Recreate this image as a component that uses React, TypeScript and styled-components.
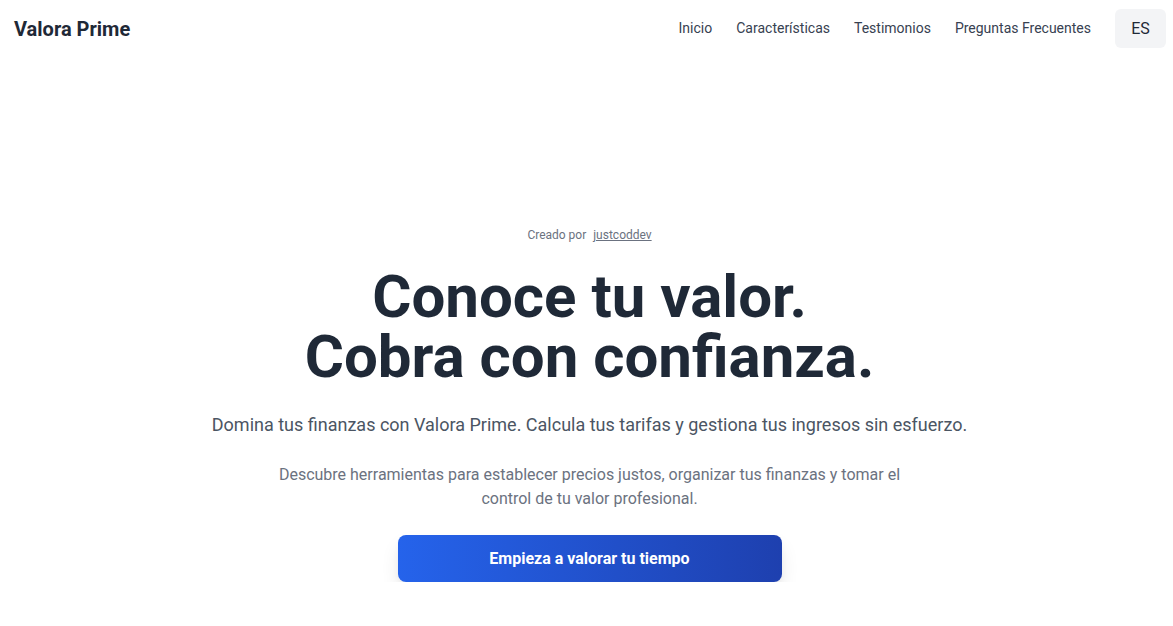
import React from "react";
import styled, { createGlobalStyle } from "styled-components";

const Global = createGlobalStyle`
  * { box-sizing: border-box; }
  body { margin: 0; font-family: Roboto, "Liberation Sans", sans-serif; background: #ffffff; color: #1f2937; }
`;

const Header = styled.header`
  display: flex;
  align-items: center;
  justify-content: space-between;
  height: 57px;
  padding: 0 7px 0 14px;
`;

const Logo = styled.div`
  font-size: 20px;
  font-weight: 700;
  color: #1f2937;
`;

const Nav = styled.nav`
  display: flex;
  align-items: center;
`;

const NavLink = styled.a`
  font-size: 14px;
  line-height: 18px;
  color: #374151;
  text-decoration: none;
  margin-right: 24px;
  margin-bottom: 2px;
`;

const LangButton = styled.button`
  width: 51px;
  height: 39px;
  border: none;
  border-radius: 6px;
  background: #f3f4f6;
  font-family: inherit;
  font-size: 16px;
  color: #1f2937;
`;

const Hero = styled.section`
  display: flex;
  flex-direction: column;
  align-items: center;
  text-align: center;
  padding: 170px 0 0 6px;
`;

const Credit = styled.p`
  margin: 0;
  font-size: 12px;
  line-height: 16px;
  color: #6b7280;
`;

const CreditLink = styled.a`
  color: #6b7280;
  text-decoration: underline;
  margin-left: 4px;
`;

const Title = styled.h1`
  margin: 24px 0 0;
  font-size: 60px;
  line-height: 60px;
  font-weight: 700;
  color: #1f2937;
`;

const Subtitle = styled.p`
  margin: 24px 0 0;
  font-size: 18px;
  line-height: 28px;
  color: #4b5563;
`;

const Description = styled.p`
  margin: 24px 0 0;
  max-width: 672px;
  font-size: 16px;
  line-height: 24px;
  color: #6b7280;
`;

const Cta = styled.button`
  margin-top: 24px;
  width: 384px;
  height: 47px;
  border: none;
  border-radius: 8px;
  background: linear-gradient(to right, #2563eb, #1e40af);
  color: #ffffff;
  font-family: inherit;
  font-size: 16px;
  font-weight: 700;
  box-shadow: 0 10px 20px -3px rgba(0, 0, 0, 0.12), 0 4px 8px -4px rgba(0, 0, 0, 0.1);
`;

export default function App() {
  return (
    <>
      <Global />
      <Header>
        <Logo>Valora Prime</Logo>
        <Nav>
          <NavLink href="#">Inicio</NavLink>
          <NavLink href="#">Características</NavLink>
          <NavLink href="#">Testimonios</NavLink>
          <NavLink href="#">Preguntas Frecuentes</NavLink>
          <LangButton>ES</LangButton>
        </Nav>
      </Header>
      <Hero>
        <Credit>
          Creado por <CreditLink href="#">justcoddev</CreditLink>
        </Credit>
        <Title>
          Conoce tu valor.
          <br />
          Cobra con confianza.
        </Title>
        <Subtitle>
          Domina tus finanzas con Valora Prime. Calcula tus tarifas y gestiona tus ingresos sin esfuerzo.
        </Subtitle>
        <Description>
          Descubre herramientas para establecer precios justos, organizar tus finanzas y tomar el control de tu valor profesional.
        </Description>
        <Cta>Empieza a valorar tu tiempo</Cta>
      </Hero>
    </>
  );
}
